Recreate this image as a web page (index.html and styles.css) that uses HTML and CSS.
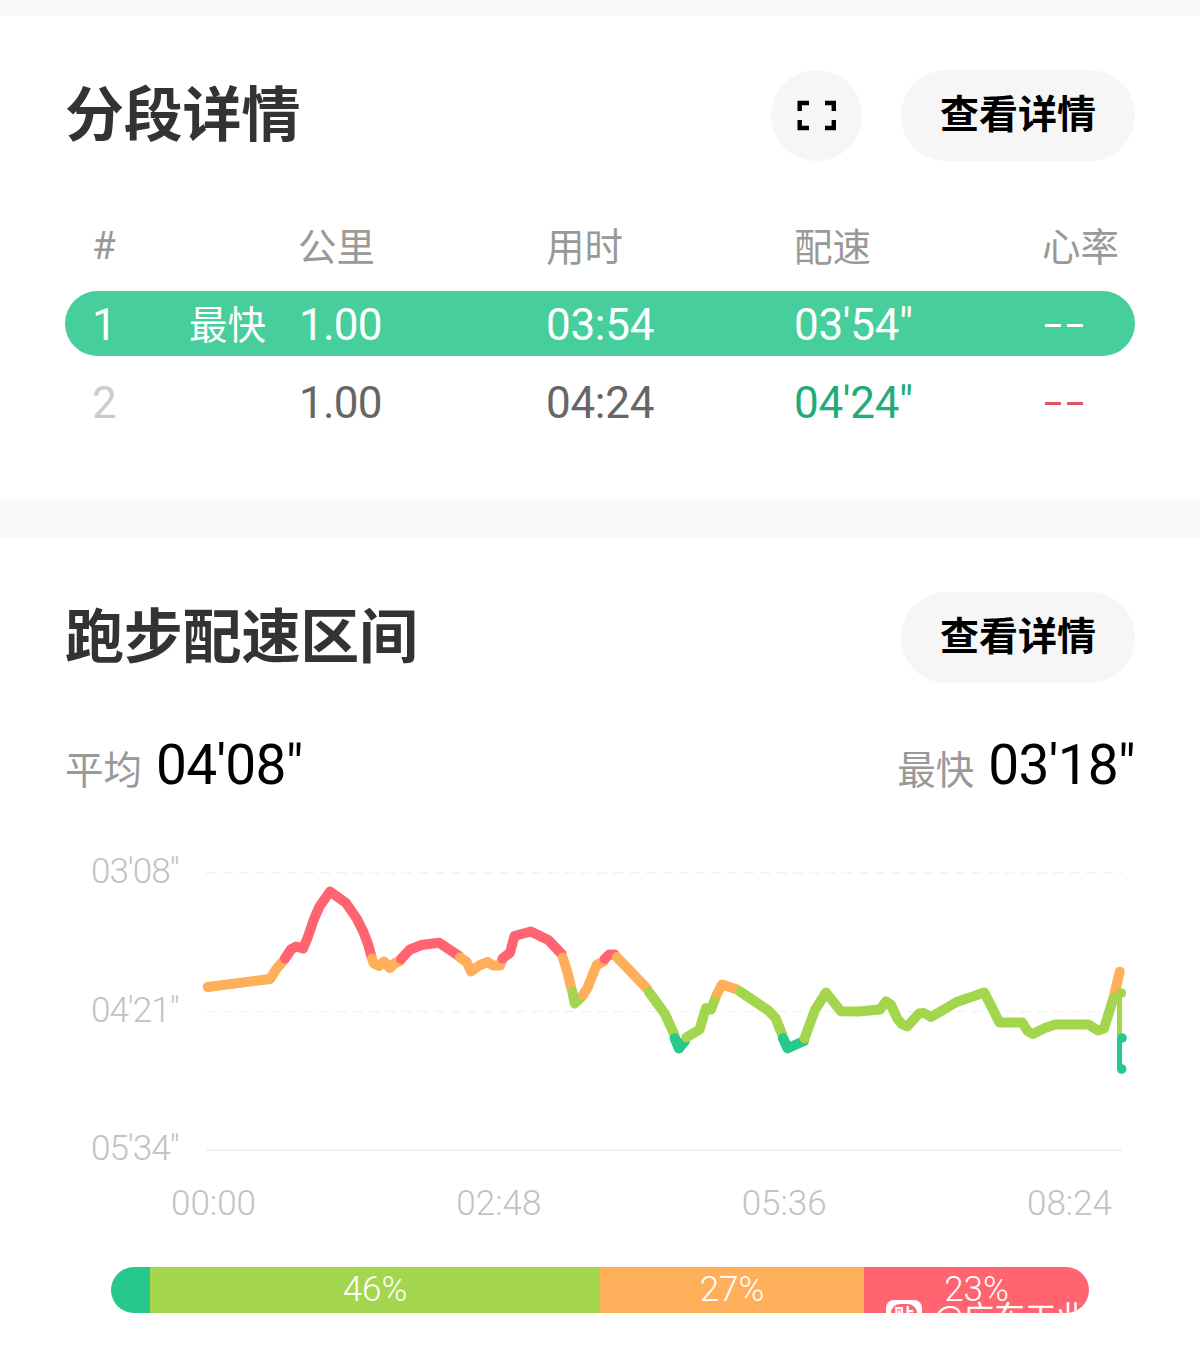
FILE: index.html
```html
<!doctype html>
<html lang="zh-CN">
  <head>
    <meta charset="UTF-8" />
    <meta name="viewport" content="width=device-width, initial-scale=1.0" />
    <title>跑步详情</title>
    <link rel="stylesheet" href="styles.css">
  </head>
  <body>
    <section class="card splits">
      <header class="card-header">
        <h2 class="title">分段详情</h2>
        <button class="btn btn-icon" aria-label="全屏">
          <svg width="40" height="32" viewBox="0 0 40 32" fill="none" stroke="#000" stroke-width="4.4">
            <path d="M2.7 11V3H12M28 3h8.800v8M36.800 20V28H28M12 28H2.700V20" />
          </svg>
        </button>
        <button class="btn">查看详情</button>
      </header>

      <div class="table">
        <div class="row row-head">
          <span class="hash">#</span>
          <span></span>
          <span>公里</span>
          <span>用时</span>
          <span>配速</span>
          <span>心率</span>
        </div>
        <div class="row row-best">
          <span class="num">1</span>
          <span class="tag">最快</span>
          <span class="num km">1.00</span>
          <span class="num">03:54</span>
          <span class="num">03'54"</span>
          <span class="dashes"><i></i><i></i></span>
        </div>
        <div class="row row-normal">
          <span class="num index">2</span>
          <span></span>
          <span class="num km">1.00</span>
          <span class="num">04:24</span>
          <span class="num pace">04'24"</span>
          <span class="dashes heart"><i></i><i></i></span>
        </div>
      </div>
    </section>

    <section class="card zones">
      <header class="card-header">
        <h2 class="title">跑步配速区间</h2>
        <button class="btn">查看详情</button>
      </header>

      <div class="stats">
        <div class="stat"><span class="label">平均</span><span class="value">04'08"</span></div>
        <div class="stat"><span class="label">最快</span><span class="value">03'18"</span></div>
      </div>

      <div class="chart">
        <div class="y-axis">
          <span>03'08"</span>
          <span>04'21"</span>
          <span>05'34"</span>
        </div>
        <svg class="plot" width="935" height="300" viewBox="200 860 935 300">
          <g class="grid">
            <path stroke-dasharray="10 6.3" d="M206 873H1122" />
            <path stroke-dasharray="10 6.3" d="M206 1011.500H1122" />
            <path class="base" d="M206 1150H1122" />
          </g>
          <g class="line">
            <path class="z-teal" d="M674.700 1038L679 1048.300L685 1041" />
            <path class="z-teal" d="M783 1038L787.700 1048.300L804 1041" />
            <path class="z-red" d="M285 958.500L291 949.500L296 946.500L303 948.500L307.500 938L314 919L319.500 906.500L330 891.500L346 903L356.700 918.500L363 931L368.300 945L371.500 957" />
            <path class="z-orange" d="M207.700 987L270 979L276 969.500L284 960" />
            <path class="z-red" d="M285 958.500L291 949.500" />
            <path class="z-orange" d="M372 958.500L373.500 963L379 966L384 961.500L390 968L395 963L400 961" />
            <path class="z-red" d="M401 959L410 949.500L421.700 945L439 942.700L459 956" />
            <path class="z-orange" d="M460 957.500L466.700 962L471 971.500L480 965L487.700 962L492.700 965.500L500 965.500L502 960" />
            <path class="z-red" d="M502.500 958.500L510 952.700L514.500 936L530.700 931.500L548.300 940L561.700 954" />
            <path class="z-orange" d="M562.700 957.500L567.300 971.700L571.500 989" />
            <path class="z-green" d="M572.300 991.700L574.700 1003.500L582 996.500" />
            <path class="z-orange" d="M583 995L587.300 988.300L596.700 965L604 961" />
            <path class="z-red" d="M604.700 959L609.300 954.500L614.500 954.500" />
            <path class="z-orange" d="M616.700 957L647 988.500" />
            <path class="z-green" d="M649 992L665 1014L674.500 1035" />
            <path class="z-teal" d="M674.700 1038L679 1048.300" />
            <path class="z-green" d="M686.300 1037.500L699.500 1029.500L703 1018L706 1008L711 1009.500L716 996.500" />
            <path class="z-orange" d="M717 994L722 984.500L737 989.500" />
            <path class="z-green" d="M740 991.500L768.300 1010.500L775.500 1018L782 1034" />
            <path class="z-teal" d="M783 1038L787.700 1048.300" />
            <path class="z-orange" d="M1114 996L1119.700 971.700" />
            <path class="z-green" d="M804.500 1038.500L815 1010L826 992.500L841 1011.300L858.500 1011.500L880 1009.500L886 1001.500L890.700 1004.500L897.300 1018.500L901.500 1024L907.300 1026.500L919 1013.500L924 1013L931 1017L956.700 1002L984.300 992.500L999.500 1022.500L1022.300 1022.500L1027.500 1031L1032.700 1034L1045 1028L1055 1024.500L1088.300 1024.500L1098 1030.500L1104 1028.500L1113.500 998" />
          </g>
          <g class="tail">
            <path class="z-green" d="M1119.500 993V1036" />
            <path class="z-teal" d="M1119.500 1038V1069" />
            <circle fill="#a3d64d" cx="1121.300" cy="993" r="4.800" />
            <circle fill="#26c88c" cx="1122" cy="1038" r="4.800" />
            <circle fill="#26c88c" cx="1121.700" cy="1069" r="4.800" />
          </g>
        </svg>
      </div>
      <div class="x-axis">
        <span>00:00</span>
        <span>02:48</span>
        <span>05:36</span>
        <span>08:24</span>
      </div>

      <div class="zone-bar">
        <div class="zone bg-teal" style="width: 4%"></div>
        <div class="zone bg-green" style="width: 46%">46%</div>
        <div class="zone bg-orange" style="width: 27%">27%</div>
        <div class="zone bg-red" style="width: 23%">23%</div>
        <div class="watermark">
          <svg width="36" height="36" viewBox="0 0 36 36">
            <rect width="36" height="36" rx="8" fill="#fff" />
            <rect x="5" y="4" width="26" height="28" rx="9" fill="#ff6470" />
            <text x="8" y="23.500" font-size="20" font-weight="700" fill="#fff">贴</text>
          </svg>
          <span>@广东工业</span>
        </div>
      </div>
    </section>
  </body>
</html>
```
FILE: styles.css
```css
* {
  box-sizing: border-box;
}
body {
  margin: 0;
  padding-top: 16px;
  background: #f9f9f9;
  font-family: "Noto Sans CJK SC", sans-serif;
  color: #333;
}
.card {
  background: #fff;
  padding: 54px 65px 0;
}
.splits {
  height: 483px;
  margin-bottom: 39px;
}
.zones {
  height: 812px;
}
.card-header {
  display: flex;
  align-items: center;
  height: 91px;
}
.title {
  margin: 0 auto 0 0;
  font-size: 59px;
  line-height: 88px;
  font-weight: 700;
  letter-spacing: -0.2px;
  padding-bottom: 10px;
}
.btn {
  width: 234px;
  height: 91px;
  padding: 0 0 10px;
  border: 0;
  border-radius: 46px;
  background: #f6f6f6;
  color: #000;
  font-family: inherit;
  font-size: 39px;
  font-weight: 700;
}
.btn-icon {
  display: flex;
  align-items: center;
  justify-content: center;
  width: 91px;
  padding: 0;
  margin-right: 39px;
}

/* splits table */
.table {
  margin-top: 43px;
}
.row {
  display: grid;
  grid-template-columns: 97px 109px 248px 248px 248px 1fr;
  align-items: center;
  padding-left: 27px;
  white-space: nowrap;
}
.row-head {
  height: 87px;
  padding-bottom: 7px;
  font-size: 38.500px;
  color: #999;
}
.hash {
  font-family: Roboto, sans-serif;
  padding-top: 3px;
}
.row-best {
  height: 65px;
  border-radius: 33px;
  background: #46cf9c;
  color: #fff;
}
.row-normal {
  height: 91px;
  color: #666;
}
.tag {
  font-size: 38.500px;
  line-height: 57px;
  padding-bottom: 2px;
}
.num {
  font-family: Roboto, sans-serif;
  font-size: 44px;
  letter-spacing: -0.3px;
  padding-top: 2px;
}
.km {
  padding-left: 1px;
  letter-spacing: -0.8px;
}
.index {
  color: #ccc;
}
.pace {
  color: #1fab7a;
}
.dashes {
  display: flex;
  gap: 6px;
  padding: 4px 0 0 3px;
}
.dashes i {
  width: 16px;
  height: 3px;
  background: currentColor;
}
.heart {
  color: #df5560;
}

/* average and best pace */
.stats {
  display: flex;
  justify-content: space-between;
  margin-top: 45px;
  height: 75px;
}
.stat {
  display: flex;
  align-items: baseline;
  gap: 14px;
  line-height: 75px;
}
.label {
  font-size: 38.500px;
  color: #999;
}
.value {
  font-family: Roboto, sans-serif;
  font-size: 55px;
  letter-spacing: -0.7px;
  color: #000;
}

.chart {
  display: flex;
  margin-top: 57px;
}
.y-axis {
  width: 135px;
  height: 300px;
  padding-left: 26px;
  display: flex;
  flex-direction: column;
  justify-content: space-between;
}
.y-axis span,
.x-axis span {
  font-family: Roboto, sans-serif;
  font-weight: 300;
  font-size: 35px;
  line-height: 23px;
  color: #c2c2c2;
}
.y-axis span {
  letter-spacing: -1px;
}
.plot {
  flex: none;
}
.grid path {
  fill: none;
  stroke: #f2f2f2;
  stroke-width: 1.5;
}
.grid .base {
  stroke: #ececec;
}
.line path {
  fill: none;
  stroke-width: 10;
  stroke-linecap: round;
  stroke-linejoin: round;
}
.tail path {
  fill: none;
  stroke-width: 5;
}
.z-red {
  stroke: #ff6470;
}
.z-orange {
  stroke: #ffaf59;
}
.z-green {
  stroke: #a3d64d;
}
.z-teal {
  stroke: #26c88c;
}
.x-axis {
  display: flex;
  justify-content: space-between;
  margin: 32px 23px 0 106px;
}

.zone-bar {
  position: relative;
  display: flex;
  height: 46px;
  margin: 52px 46px 0;
  border-radius: 23px;
  overflow: hidden;
}
.zone {
  font-family: Roboto, sans-serif;
  font-weight: 300;
  font-size: 35px;
  line-height: 45px;
  text-align: center;
  color: #fff;
}
.bg-teal {
  background: #26c88c;
}
.bg-green {
  background: #a3d64d;
}
.bg-orange {
  background: #ffaf59;
}
.bg-red {
  background: #ff6470;
}
.watermark {
  position: absolute;
  left: 775px;
  top: 33px;
  display: flex;
  gap: 12px;
  font-size: 31px;
  line-height: 30px;
  color: #fff;
  white-space: nowrap;
}
```
